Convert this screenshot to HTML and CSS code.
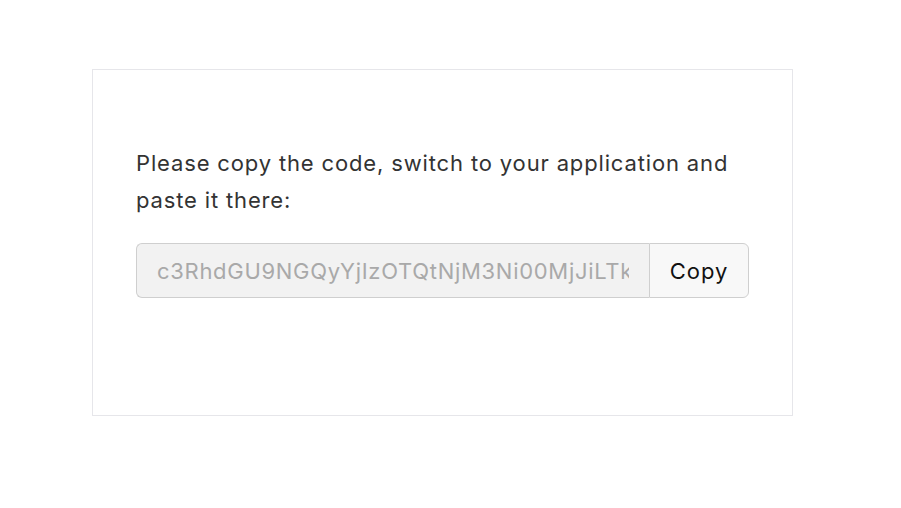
FILE: index.html
```html
<!DOCTYPE html>
<html>
<head>
<meta charset="utf-8">
<link rel="stylesheet" href="styles.css">
</head>
<body>
<div class="card">
  <p class="msg">Please copy the code, switch to your application and paste it there:</p>
  <div class="group">
    <input class="code" type="text" readonly value="c3RhdGU9NGQyYjIzOTQtNjM3Ni00MjJiLTk0ZjItYTBmNjYyNmY0ZTAx">
    <button class="copy">Copy</button>
  </div>
</div>
</body>
</html>
```
FILE: styles.css
```css
html, body {
  margin: 0;
  padding: 0;
  background: #fff;
}
body {
  padding: 69px 0 0 92px;
  font-family: Inter, "Noto Sans", sans-serif;
}
.card {
  box-sizing: border-box;
  width: 701px;
  height: 347px;
  border: 1px solid #e6e6ea;
  padding: 75px 43px 0 43px;
}
.msg {
  margin: 0;
  font-size: 22px;
  line-height: 37px;
  letter-spacing: 0.85px;
  color: #333;
  max-width: 610px;
}
.group {
  display: flex;
  margin-top: 24px;
  width: 613px;
  height: 55px;
}
.code {
  flex: 1;
  min-width: 0;
  box-sizing: border-box;
  height: 55px;
  margin: 0;
  padding: 0 20px;
  border: 1px solid #cfcfcf;
  border-right: none;
  border-radius: 6px 0 0 6px;
  background: #f2f2f2;
  color: #a9a9a9;
  font-family: inherit;
  font-size: 22px;
  letter-spacing: 0.7px;
  outline: none;
}
.copy {
  box-sizing: border-box;
  width: 100px;
  height: 55px;
  margin: 0;
  border: 1px solid #cfcfcf;
  border-radius: 0 6px 6px 0;
  background: #f8f8f8;
  color: #111;
  font-family: inherit;
  font-size: 22px;
  letter-spacing: 1px;
  padding: 0;
}
```
